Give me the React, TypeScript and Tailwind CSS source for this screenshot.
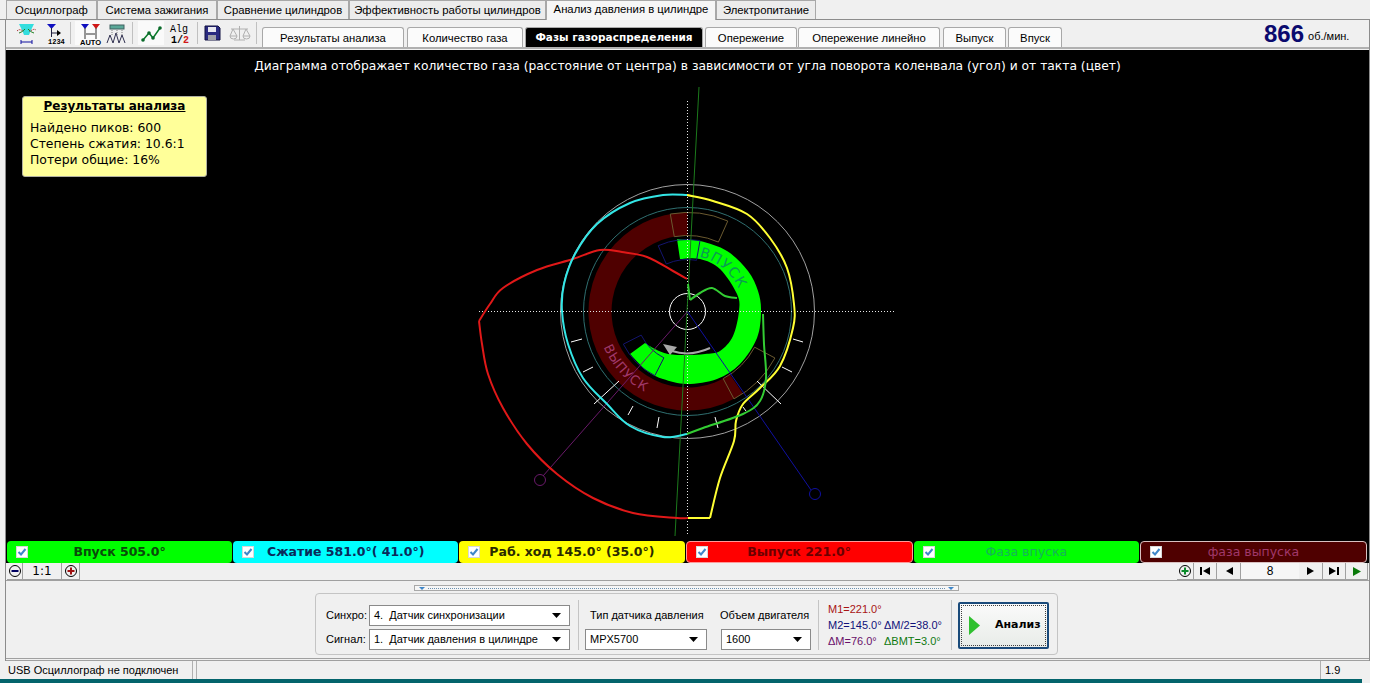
import * as React from "react";

const CX = 687.5;
const CY = 310.5;

const polar = (r: number, deg: number) => {
  const a = (deg * Math.PI) / 180;
  return [CX + r * Math.sin(a), CY - r * Math.cos(a)];
};

// annular sector between two radii, angles clockwise from the top
const sector = (r1: number, r2: number, a1: number, a2: number) => {
  const [x1, y1] = polar(r2, a1);
  const [x2, y2] = polar(r2, a2);
  const [x3, y3] = polar(r1, a2);
  const [x4, y4] = polar(r1, a1);
  const large = a2 - a1 > 180 ? 1 : 0;
  return `M${x1} ${y1}A${r2} ${r2} 0 ${large} 1 ${x2} ${y2}L${x3} ${y3}A${r1} ${r1} 0 ${large} 0 ${x4} ${y4}Z`;
};

const arcPath = (r: number, a1: number, a2: number) => {
  const [x1, y1] = polar(r, a1);
  const [x2, y2] = polar(r, a2);
  return `M${x1} ${y1}A${r} ${r} 0 0 ${a2 > a1 ? 1 : 0} ${x2} ${y2}`;
};

type Pt = number[];

// catmull-rom through the traced points, so curves don't look like polygons
const smooth = (p: Pt[], move = true) => {
  let d = move ? `M${p[0][0]} ${p[0][1]}` : `L${p[0][0]} ${p[0][1]}`;
  for (let i = 0; i < p.length - 1; i++) {
    const a = p[Math.max(i - 1, 0)];
    const b = p[i];
    const c = p[i + 1];
    const e = p[Math.min(i + 2, p.length - 1)];
    d += `C${b[0] + (c[0] - a[0]) / 6} ${b[1] + (c[1] - a[1]) / 6} ${c[0] - (e[0] - b[0]) / 6} ${c[1] - (e[1] - b[1]) / 6} ${c[0]} ${c[1]}`;
  }
  return d;
};

const red1 = [[687, 278], [673, 270], [647, 256], [622, 251], [600, 249], [573, 258], [537, 269], [503, 287], [490, 303], [479, 320]];
const red2 = [[479, 320], [482, 343], [488, 373], [503, 407], [527, 443], [557, 473], [593, 497], [633, 512], [677, 517], [688, 517]];
const yellow = [[710, 517], [720, 477], [734, 440], [736, 420], [743, 403], [760, 387], [780, 365], [793, 327], [794, 303], [787, 267], [770, 237], [747, 213], [713, 200], [687, 194]];
const cyan = [[687, 194], [663, 194], [630, 202], [597, 223], [575, 253], [564, 283], [562, 310], [568, 343], [583, 377], [607, 403], [630, 425], [663, 436], [687, 433]];
const lime = [[687, 433], [703, 427], [743, 413], [760, 400], [766, 377], [764, 343], [763, 313]];
const limeInner = [[737, 297], [725, 295], [712, 287], [700, 292], [690, 299]];

const greenOuter = [[677, 238], [700, 240], [727, 250], [748, 270], [758, 290], [761, 310], [757, 337], [740, 363], [717, 378], [687, 383], [663, 378], [647, 370], [630, 353]];
const greenInner = [[645, 342], [655, 348], [668, 353], [687, 354], [705, 353], [720, 350], [733, 335], [739, 310], [737, 293], [720, 268], [700, 258], [680, 258]];

const ticks = [
  [571, 341, 582, 338],
  [583, 371, 593, 366],
  [594, 403, 619, 380],
  [628, 414, 633, 405],
  [657, 427, 659, 416],
  [718, 427, 715, 416],
  [781, 403, 757, 380],
  [792, 371, 782, 366],
  [803, 341, 793, 338],
  [746, 410, 743, 406],
];

function Diagram() {
  return (
    <svg className="absolute left-0 top-0" width="1363" height="490" viewBox="6 49 1363 490">
      <defs>
        <path id="vpusk-arc" d={arcPath(56, 12, 70)} />
        <path id="vypusk-arc" d={arcPath(91, 247, 195)} />
      </defs>
      <path d={sector(76, 99, 146, 360)} fill="#4f0000" />
      <path d={`${smooth(greenOuter)}${smooth(greenInner, false)}Z`} fill="#00ff00" />
      <text fontFamily="'DejaVu Sans', sans-serif" fontSize="14" fill="#0a9a55" letterSpacing="1">
        <textPath href="#vpusk-arc">ВПУСК</textPath>
      </text>
      <text fontFamily="'DejaVu Sans', sans-serif" fontSize="13" fill="#a0386a" letterSpacing="1">
        <textPath href="#vypusk-arc">ВЫПУСК</textPath>
      </text>
      <g fill="none">
        <circle cx={CX} cy={CY} r="127" stroke="#a0a0a0" />
        <circle cx={CX} cy={CY} r="104" stroke="#2f6f70" />
        <circle cx={CX} cy={CY} r="18" stroke="#ffffff" />
        <path d={sector(76, 99, -10, 24)} stroke="#6b5a30" />
        <path d={sector(76, 99, 118, 152)} stroke="#6b5a30" />
        <path d={sector(52, 72, -24, 10)} stroke="#14146e" />
        <path d={sector(52, 72, 207, 243)} stroke="#14146e" />
        <line x1="479" y1={CY} x2="895" y2={CY} stroke="#e8e8e8" strokeDasharray="1 2" />
        <line x1={CX} y1="100" x2={CX} y2="533" stroke="#e8e8e8" strokeDasharray="1 2" />
        <line x1="699" y1="86" x2="675" y2="535" stroke="#1c7a1c" />
        <line x1={CX} y1={CY} x2="543" y2="475" stroke="#6a1a6a" />
        <circle cx="540" cy="479" r="5.5" stroke="#6a1a6a" />
        <line x1={CX} y1={CY} x2="811" y2="489" stroke="#1010a0" />
        <circle cx="815" cy="493" r="5.5" stroke="#1010a0" />
        {ticks.map(([x1, y1, x2, y2]) => (
          <line key={`${x1}-${y1}`} x1={x1} y1={y1} x2={x2} y2={y2} stroke="#ffffff" />
        ))}
        <path d="M710 347Q690 356 672 350" stroke="#a8a8a8" strokeWidth="2" />
        <path d={smooth(red1)} stroke="#e01818" strokeWidth="2" />
        <path d={smooth(red2)} stroke="#e01818" strokeWidth="2" />
        <path d="M688 517H710" stroke="#ffff33" strokeWidth="2" />
        <path d={smooth(yellow)} stroke="#ffff33" strokeWidth="2" />
        <path d={smooth(cyan)} stroke="#33e6e6" strokeWidth="2" />
        <path d={smooth(lime)} stroke="#33cc33" strokeWidth="2" />
        <path d={smooth(limeInner)} stroke="#33cc33" strokeWidth="2" />
        <path d="M690 299L688 283" stroke="#33cc33" strokeWidth="2" />
      </g>
      <polygon points="663,343 677,346 670,354" fill="#a8a8a8" />
    </svg>
  );
}

const topTabs = [
  { label: "Осциллограф", w: "w-[91px]" },
  { label: "Система зажигания", w: "w-[120px]" },
  { label: "Сравнение цилиндров", w: "w-[132px]" },
  { label: "Эффективность работы цилиндров", w: "w-[197px]" },
  { label: "Анализ давления в цилиндре", w: "w-[170px]", active: true },
  { label: "Электропитание", w: "w-[100px]" },
];

const subTabs = [
  { label: "Результаты анализа", w: "w-[142px]" },
  { label: "Количество газа", w: "ml-[3px] w-[116px]" },
  { label: "Фазы газораспределения", w: "ml-[2px] w-[178px]", active: true },
  { label: "Опережение", w: "ml-[2px] w-[92px]" },
  { label: "Опережение линейно", w: "ml-px w-[142px]" },
  { label: "Выпуск", w: "ml-[3px] w-[63px]" },
  { label: "Впуск", w: "ml-[2px] w-[54px]" },
];

const legend = [
  { label: "Впуск 505.0°", cls: "bg-[#00ff00] text-[#0a4a0a] font-bold" },
  { label: "Сжатие 581.0°( 41.0°)", cls: "bg-[#00ffff] text-[#0a2a5a] font-bold" },
  { label: "Раб. ход 145.0° (35.0°)", cls: "bg-[#ffff00] text-[#2a2a00] font-bold" },
  { label: "Выпуск 221.0°", cls: "border border-[#ff9a9a] bg-[#ff0000] text-[#6a0000] font-bold" },
  { label: "Фаза впуска", cls: "bg-[#00ff00] text-[#14b45a]" },
  { label: "фаза выпуска", cls: "border border-[#d8c0c0] bg-[#4f0000] text-[#a0386a]" },
];

function Check() {
  return (
    <span className="flex h-[12px] w-[12px] shrink-0 items-center justify-center border border-[#d8d8d8] bg-white">
      <svg width="10" height="10" viewBox="0 0 10 10" fill="none">
        <path d="M1.5 5l2.5 2.5L8.500 2" stroke="#3f86c8" strokeWidth="2" />
      </svg>
    </span>
  );
}

function Select({ value, w }: { value: string; w: string }) {
  return (
    <div className={`flex h-[21px] items-center justify-between border border-[#8a8a8a] bg-white pl-[4px] pr-[8px] ${w}`}>
      <span className="whitespace-pre">{value}</span>
      <svg width="9" height="5" viewBox="0 0 9 5">
        <path d="M0 0h9L4.500 5z" fill="#000000" />
      </svg>
    </div>
  );
}

function NavButton({ w, children }: { w: string; children: React.ReactNode }) {
  return (
    <div className={`flex h-[17px] items-center justify-center border-b border-r border-[#a0a0a0] bg-[#f0f0f0] ${w}`}>
      {children}
    </div>
  );
}

function RoundSign({ color, plus }: { color: string; plus: boolean }) {
  return (
    <svg width="14" height="14" viewBox="0 0 14 14" fill="none">
      <circle cx="7" cy="7" r="5.500" stroke="#000000" />
      <path d={plus ? "M3.500 7h7M7 3.500v7" : "M3.500 7h7"} stroke={color} strokeWidth="2" />
    </svg>
  );
}

function Toolbar() {
  return (
    <div className="flex h-[27px] w-[256px] items-center text-[#000000]">
      <svg width="256" height="27" viewBox="6 20 256 27">
        {/* pressed groups */}
        <rect x="75" y="21" width="25" height="24" fill="#fafafa" />
        <rect x="138" y="21" width="26" height="24" fill="#fafafa" />
        <g stroke="#c0c0c0">
          <line x1="70.500" y1="22" x2="70.500" y2="44" />
          <line x1="132.500" y1="22" x2="132.500" y2="44" />
          <line x1="197.500" y1="22" x2="197.500" y2="44" />
          <line x1="256.500" y1="22" x2="256.500" y2="44" />
        </g>
        {/* wave icon */}
        <path d="M19 24h15l-3 6-2 5h-5l-2-5z" fill="#33dede" />
        <path d="M17 31c3-3 5 0 7 0M29 31c3 0 4-3 7-1" fill="none" stroke="#a02020" strokeDasharray="1 1" />
        <path d="M19 33c3-1 4-2 6-4M34 33c-3-1-4-2-6-4" fill="none" stroke="#208020" />
        <path d="M21 42h11M21 40v4M32 40v4" stroke="#1010a0" fill="none" />
        {/* marker icon */}
        <path d="M47 24h9l-4.500 5z" fill="#1010c0" />
        <path d="M51.500 28v9M52 33h8" stroke="#202040" fill="none" />
        <path d="M57 30l4 3-4 3z" fill="#000000" />
        <text x="48" y="44" fontFamily="'Liberation Mono', monospace" fontSize="7" fontWeight="700">1234</text>
        {/* auto icon */}
        <path d="M81 24h8l-4 5z" fill="#1010c0" />
        <path d="M92 24h8l-4 5z" fill="#d01818" />
        <path d="M85 28v11M96 28v11M86 34h9" stroke="#303030" fill="none" />
        <text x="80" y="45" fontFamily="'Liberation Sans', sans-serif" fontSize="7.500" fontWeight="700">AUTO</text>
        {/* peaks icon */}
        <rect x="110" y="25" width="14" height="4" fill="#5aa898" stroke="#406060" />
        <path d="M107 43l3-8 3 8 3-10 3 10 3-8 3 8" fill="none" stroke="#303050" />
        <path d="M112 30v5M117 30v5M122 30v5" stroke="#808080" strokeDasharray="1 1" />
        {/* graph icon */}
        <path d="M143 40l6-7 4 5 7-10" fill="none" stroke="#0a7a2a" strokeWidth="1.500" />
        <g fill="#0a6a2a">
          <circle cx="143" cy="40" r="1.800" />
          <circle cx="149" cy="33" r="1.800" />
          <circle cx="153" cy="38" r="1.800" />
          <circle cx="160" cy="28" r="1.800" />
        </g>
        {/* alg icon */}
        <text x="170" y="32" fontFamily="'Liberation Mono', monospace" fontSize="10">Alg</text>
        <text x="171" y="43" fontFamily="'Liberation Mono', monospace" fontSize="10" fontWeight="700">1/<tspan fill="#d01818">2</tspan></text>
        {/* save icon */}
        <path d="M205 26h13l2 2v12h-15z" fill="#2a2a80" stroke="#101040" />
        <rect x="208" y="27" width="8" height="5" fill="#e8e8f0" />
        <rect x="208" y="35" width="8" height="5" fill="#a0a0a8" />
        {/* scales icon */}
        <g stroke="#b0b0b0" fill="none">
          <path d="M239.500 26v14M231 29h17M234 40h11" />
          <path d="M233 29l-3 7h7zM246 29l-3 7h7z" />
          <path d="M230 36a3.500 3 0 0 0 7 0M243 36a3.500 3 0 0 0 7 0" />
        </g>
      </svg>
    </div>
  );
}

export default function App() {
  return (
    <div className="h-[683px] w-[1382px] overflow-hidden bg-white font-['Liberation_Sans',sans-serif] text-[11px] text-black">
      <div className="flex h-[683px] w-[1370px] flex-col bg-[#f0f0f0]">
        {/* main tabs */}
        <div className="flex h-[20px] shrink-0 items-end border-b border-[#8c8c8c] pl-[6px] text-[11.3px]">
          {topTabs.map((t) => (
            <div
              key={t.label}
              className={`flex items-center justify-center border-x border-t border-[#a8a8a8] ${t.w} ${
                t.active ? "relative -mb-px h-[20px] bg-[#f6f6f6] pb-[3px]" : "h-[19px] bg-[#ececec]"
              }`}
            >
              {t.label}
            </div>
          ))}
        </div>

        <div className="ml-[5px] flex min-h-0 flex-1 flex-col border-x border-[#8c8c8c]">
          {/* toolbar and sub tabs */}
          <div className="flex h-[27px] shrink-0 items-end">
            <Toolbar />
            <div className="flex items-end text-[11.3px]">
              {subTabs.map((t) => (
                <div
                  key={t.label}
                  className={`flex h-[20px] items-center justify-center rounded-t-[3px] border-x border-t border-[#a8a8a8] pt-px ${t.w} ${
                    t.active ? "bg-black font-['DejaVu_Sans',sans-serif] text-[10.5px] font-bold text-white" : "bg-[#fbfbfb]"
                  }`}
                >
                  {t.label}
                </div>
              ))}
            </div>
            <div className="ml-auto flex h-[27px] w-[105px] items-center">
              <span className="text-[24px] font-bold leading-none text-[#0a0a6e]">866</span>
              <span className="ml-[4px] mt-[5px]">об./мин.</span>
            </div>
          </div>
          <div className="h-[2px] shrink-0 border-y border-[#b0b0b0]"></div>

          {/* chart */}
          <div className="relative mt-px h-[490px] shrink-0 overflow-hidden bg-black">
            <Diagram />
            <p className="relative pt-[8px] text-center font-['DejaVu_Sans',sans-serif] text-[12.3px] leading-[16px] text-white">
              Диаграмма отображает количество газа (расстояние от центра) в зависимости от угла поворота коленвала (угол) и от такта (цвет)
            </p>
            <div className="absolute left-[16px] top-[46px] h-[81px] w-[185px] rounded-[3px] border border-[#b0b0a0] bg-[#ffff99] px-[7px] pt-px font-['DejaVu_Sans',sans-serif] text-[12.4px] leading-[16px]">
              <div className="text-center text-[12px] font-bold underline">Результаты анализа</div>
              <div className="mt-[6px]">Найдено пиков: 600</div>
              <div>Степень сжатия: 10.6:1</div>
              <div>Потери общие: 16%</div>
            </div>
          </div>

          {/* legend */}
          <div className="flex h-[23px] shrink-0 gap-px bg-black pl-px pr-[2px] pt-px font-['DejaVu_Sans',sans-serif] text-[12.5px]">
            {legend.map((l) => (
              <div key={l.label} className={`flex h-[22px] flex-1 items-center rounded-[4px] pl-[9px] ${l.cls}`}>
                <Check />
                <span className="flex-1 pr-[21px] text-center">{l.label}</span>
              </div>
            ))}
          </div>

          {/* zoom and navigation */}
          <div className="flex h-[18px] shrink-0 items-start justify-between border-b border-[#a0a0a0] pl-px">
            <div className="flex items-center">
              <NavButton w="w-[16px]"><RoundSign color="#000060" plus={false} /></NavButton>
              <NavButton w="w-[39px]"><span className="font-['DejaVu_Sans',sans-serif] text-[12px]">1:1</span></NavButton>
              <NavButton w="w-[18px]"><RoundSign color="#a01010" plus={true} /></NavButton>
            </div>
            <div className="flex items-center pr-px">
              <NavButton w="w-[17px]"><RoundSign color="#0a8a2a" plus={true} /></NavButton>
              <NavButton w="w-[23px]">
                <svg width="10" height="8" viewBox="0 0 10 8"><path d="M0 0h2v8H0zM10 0v8L3 4z" /></svg>
              </NavButton>
              <NavButton w="w-[24px]">
                <svg width="8" height="8" viewBox="0 0 8 8"><path d="M8 0v8L1 4z" /></svg>
              </NavButton>
              <div className="flex h-[17px] w-[58px] items-center justify-center border-b border-[#a0a0a0] bg-[#f6f6f6] text-[12px]">8</div>
              <NavButton w="w-[24px]">
                <svg width="8" height="8" viewBox="0 0 8 8"><path d="M0 0v8l7-4z" /></svg>
              </NavButton>
              <NavButton w="w-[23px]">
                <svg width="10" height="8" viewBox="0 0 10 8"><path d="M0 0v8l7-4zM8 0h2v8H8z" /></svg>
              </NavButton>
              <NavButton w="w-[22px]">
                <svg width="8" height="9" viewBox="0 0 8 9"><path d="M0 0v9l8-4.500z" fill="#0a7a0a" /></svg>
              </NavButton>
            </div>
          </div>

          {/* bottom panel */}
          <div className="flex h-[80px] shrink-0 flex-col items-center border-b-[3px] border-double border-[#a0a0a0] pr-[2px] pt-[4px]">
            <div className="flex h-[6px] w-[545px] items-center justify-between border border-[#a8a8a8] bg-[#f6f6f6] px-[4px]">
              <svg width="6" height="3" viewBox="0 0 6 3"><path d="M0 0h6L3 3z" fill="#3f86c8" /></svg>
              <div className="mx-[3px] h-px flex-1 border-t border-dotted border-[#6a90b0]"></div>
              <svg width="6" height="3" viewBox="0 0 6 3"><path d="M0 0h6L3 3z" fill="#3f86c8" /></svg>
            </div>
            <div className="mt-[2px] flex h-[62px] w-[743px] items-end rounded-[4px] border border-[#c4c4c4] pb-[4px] pl-[10px] text-[11px]">
              <div className="flex flex-col gap-[3px]">
                <div className="flex items-center justify-between">
                  <span className="mr-[4px] w-[39px]">Синхро:</span>
                  <Select value="4.  Датчик синхронизации" w="w-[201px]" />
                </div>
                <div className="flex items-center justify-between">
                  <span className="mr-[4px] w-[39px]">Сигнал:</span>
                  <Select value="1.  Датчик давления в цилиндре" w="w-[201px]" />
                </div>
              </div>
              <div className="ml-[8px] mr-[6px] h-[50px] w-px bg-[#c4c4c4]"></div>
              <div className="flex flex-col">
                <span className="mb-[6px] pl-[5px]">Тип датчика давления</span>
                <Select value="MPX5700" w="w-[122px]" />
              </div>
              <div className="ml-[14px] flex flex-col">
                <span className="-ml-px mb-[6px]">Объем двигателя</span>
                <Select value="1600" w="w-[90px]" />
              </div>
              <div className="ml-[7px] h-[50px] w-px bg-[#c4c4c4]"></div>
              <div className="mb-px grid w-[132px] grid-cols-[56px_auto] pl-[9px] text-[11px] leading-[16px]">
                <div className="col-span-2 text-[#a81414]">M1=221.0°</div>
                <div className="text-[#10107a]">M2=145.0°</div>
                <div className="text-[#10107a]">ΔM/2=38.0°</div>
                <div className="text-[#6a106a]">ΔM=76.0°</div>
                <div className="text-[#107a10]">ΔBMT=3.0°</div>
              </div>
              <div className="h-[50px] w-px bg-[#c4c4c4]"></div>
              <div className="mb-px ml-[6px] flex h-[47px] w-[91px] items-center rounded-[2px] border-2 border-[#1a4a7a] bg-gradient-to-b from-[#fafafa] to-[#e8ece8] pl-[9px] outline-1 -outline-offset-4 outline-dotted outline-[#404040]">
                <svg width="11" height="19" viewBox="0 0 11 19"><path d="M0 0l11 9.500L0 19z" fill="#2fc02f" /></svg>
                <span className="ml-[15px] font-['DejaVu_Sans',sans-serif] text-[11px] font-bold">Анализ</span>
              </div>
            </div>
          </div>
        </div>

        {/* status bar */}
        <div className="flex h-[18px] shrink-0 items-stretch">
          <div className="flex w-[193px] items-center border-r border-[#b0b0b0] pl-[8px]">USB Осциллограф не подключен</div>
          <div className="ml-[3px] flex-1 border-x border-[#b0b0b0]"></div>
          <div className="ml-[2px] flex w-[47px] items-center pl-[2px]">1.9</div>
        </div>
        <div className="h-[4px] w-[1362px] shrink-0 bg-[#04646c]"></div>
      </div>
    </div>
  );
}
